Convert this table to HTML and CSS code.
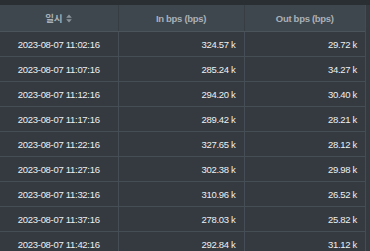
FILE: index.html
```html
<!DOCTYPE html>
<html lang="ko">
<head>
<meta charset="utf-8">
<link rel="stylesheet" href="styles.css">
</head>
<body>
<div class="topbar"></div>
<div class="grid-wrap">
<table class="grid">
  <colgroup>
    <col class="c1"><col class="c2"><col class="c3">
  </colgroup>
  <thead>
    <tr>
      <th class="center"><span class="th-label">일시</span><svg class="sort" width="6" height="9" viewBox="0 0 6 9"><path d="M3 0.5 L5.8 3.8 H0.2 Z" fill="#8c949b"/><path d="M3 8.5 L5.8 5.2 H0.2 Z" fill="#8c949b"/></svg></th>
      <th class="center">In bps (bps)</th>
      <th class="center">Out bps (bps)</th>
    </tr>
  </thead>
  <tbody>
    <tr><td class="center">2023-08-07 11:02:16</td><td class="num">324.57 k</td><td class="num">29.72 k</td></tr>
    <tr><td class="center">2023-08-07 11:07:16</td><td class="num">285.24 k</td><td class="num">34.27 k</td></tr>
    <tr><td class="center">2023-08-07 11:12:16</td><td class="num">294.20 k</td><td class="num">30.40 k</td></tr>
    <tr><td class="center">2023-08-07 11:17:16</td><td class="num">289.42 k</td><td class="num">28.21 k</td></tr>
    <tr><td class="center">2023-08-07 11:22:16</td><td class="num">327.65 k</td><td class="num">28.12 k</td></tr>
    <tr><td class="center">2023-08-07 11:27:16</td><td class="num">302.38 k</td><td class="num">29.98 k</td></tr>
    <tr><td class="center">2023-08-07 11:32:16</td><td class="num">310.96 k</td><td class="num">26.52 k</td></tr>
    <tr><td class="center">2023-08-07 11:37:16</td><td class="num">278.03 k</td><td class="num">25.82 k</td></tr>
    <tr><td class="center">2023-08-07 11:42:16</td><td class="num">292.84 k</td><td class="num">31.12 k</td></tr>
  </tbody>
</table>
</div>
</body>
</html>
```

FILE: styles.css
```css
html, body {
  margin: 0;
  padding: 0;
  background: #343a40;
  overflow: hidden;
}
body {
  font-family: "Liberation Sans", "Noto Sans CJK KR", sans-serif;
  font-size: 9.5px;
  letter-spacing: -0.3px;
  color: #eef0f2;
}
.topbar {
  height: 5px;
  background: #2a2f34;
}
.grid-wrap {
  width: 365px;
  border-right: 1px solid #454d54;
}
.grid {
  width: 365px;
  border-collapse: collapse;
  table-layout: fixed;
}
.c1 { width: 118px; }
.c2 { width: 126px; }
.c3 { width: 121px; }
.grid th {
  height: 26px;
  padding: 0 6px;
  background: #3e474e;
  color: #a9b1b8;
  font-weight: bold;
  font-size: 9.5px;
  border-bottom: 1px solid #4b545b;
  border-right: 1px solid #363d43;
  white-space: nowrap;
}
.grid th:last-child { border-right: none; }
.grid td {
  height: 24px;
  padding: 0 8px;
  border-bottom: 1px solid #464e55;
  border-right: 1px solid #464e55;
  white-space: nowrap;
}
.grid td:last-child { border-right: none; }
.center { text-align: center; }
.num { text-align: right; }
.th-label { vertical-align: middle; }
.sort {
  margin-left: 4px;
  vertical-align: middle;
}
```
